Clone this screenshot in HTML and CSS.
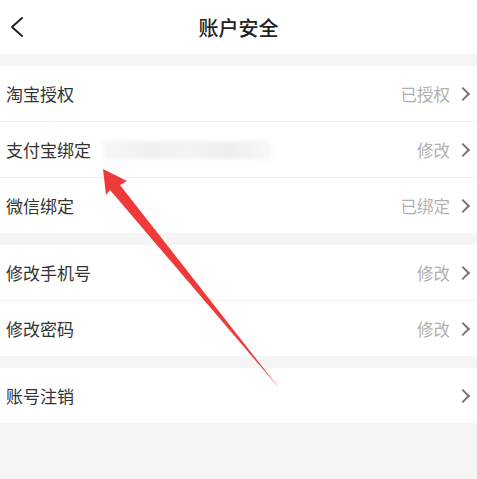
FILE: index.html
```html
<!DOCTYPE html>
<html lang="zh-CN">

<head>
    <meta charset="UTF-8">
    <meta name="viewport" content="width=device-width, initial-scale=1.0">
    <title>账户安全</title>
    <link rel="stylesheet" href="styles.css">
</head>

<body>
    <header class="topbar">
        <svg class="back" width="16" height="22" viewBox="0 0 16 22">
            <path d="M13 2 L3 11 L13 20" fill="none" stroke="#222" stroke-width="2" stroke-linecap="round" stroke-linejoin="round" />
        </svg>
        <h1>账户安全</h1>
    </header>

    <section class="group">
        <div class="row"><span class="label">淘宝授权</span><span class="value">已授权</span><span class="arrow"></span></div>
        <div class="row"><span class="label">支付宝绑定</span><span class="masked"></span><span class="value">修改</span><span class="arrow"></span></div>
        <div class="row"><span class="label">微信绑定</span><span class="value">已绑定</span><span class="arrow"></span></div>
    </section>

    <section class="group">
        <div class="row"><span class="label">修改手机号</span><span class="value">修改</span><span class="arrow"></span></div>
        <div class="row"><span class="label">修改密码</span><span class="value">修改</span><span class="arrow"></span></div>
    </section>

    <section class="group">
        <div class="row"><span class="label">账号注销</span><span class="value"></span><span class="arrow"></span></div>
    </section>

    <!-- red annotation arrow drawn over the list -->
    <svg class="pointer" width="477" height="479" viewBox="0 0 477 479">
        <path d="M103 169 L127 181 L120 185 L279 388 L110 190 L106 195 Z" fill="#f03a3a" />
    </svg>
</body>

</html>
```

FILE: styles.css
```css
* {
    box-sizing: border-box;
}

body {
    margin: 0;
    background-color: #f5f5f5;
    font-family: "Noto Sans CJK SC", "Noto Sans", sans-serif;
    height: 479px;
    overflow: hidden;
    position: relative;
}

.topbar {
    height: 54px;
    background-color: #fff;
    display: flex;
    align-items: center;
    justify-content: center;
    position: relative;
}

.topbar h1 {
    margin: 0;
    font-size: 20px;
    font-weight: 500;
    color: #222;
}

.back {
    position: absolute;
    left: 9px;
    top: 16px;
}

.group {
    background-color: #fff;
    margin-top: 12px;
}

.row {
    height: 55px;
    display: flex;
    align-items: center;
    padding: 0 7px 0 6px;
}

.row + .row {
    border-top: 1px solid #f0f0f0;
    height: 56px;
}

.label {
    font-size: 17px;
    color: #333;
}

.masked {
    width: 168px;
    height: 18px;
    margin-left: 12px;
    background: linear-gradient(90deg, #f6f6f6, #efefef 30%, #f3f3f3 50%, #eeeeee 75%, #f7f7f7);
    filter: blur(2px);
}

.value {
    margin-left: auto;
    font-size: 16.5px;
    color: #b0b0b0;
}

.arrow {
    width: 10px;
    height: 10px;
    border-top: 2.5px solid #777;
    border-right: 2.5px solid #777;
    transform: rotate(45deg);
    margin-left: 8px;
    margin-right: 2px;
}

.pointer {
    position: absolute;
    left: 0;
    top: 0;
    pointer-events: none;
}
```
